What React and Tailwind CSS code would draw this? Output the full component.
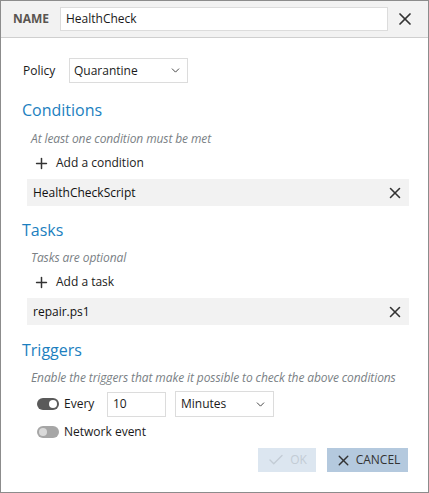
import { X, Plus, Check, ChevronDown } from "lucide-react";

function Toggle({ on }) {
    return (
        <span
            className={`relative inline-block h-[12px] w-[22px] rounded-full ${on ? "bg-[#5a5a5a]" : "bg-[#a6a6a6]"}`}
        >
            <span
                className={`absolute top-[2px] h-[8px] w-[8px] rounded-full ${on ? "right-[2px] bg-white" : "left-[2px] bg-[#d9d9d9]"}`}
            ></span>
        </span>
    );
}

function Item({ label }) {
    return (
        <div className="mt-[4px] ml-[5px] flex h-[27px] w-[382px] items-center justify-between bg-[#f2f2f2] pl-[6px] pr-[5px]">
            <span className="text-[#111]">{label}</span>
            <X size={18} strokeWidth={2.1} className="text-[#333]" />
        </div>
    );
}

function AddLink({ label }) {
    return (
        <div className="mt-[2px] ml-[11px] flex h-[24px] items-center gap-[6px] text-[#222]">
            <Plus size={17} strokeWidth={2.1} className="text-[#333]" />
            <span>{label}</span>
        </div>
    );
}

function Heading({ children, className }) {
    return <div className={`flex h-[24px] items-center text-[16px] text-[#1c7fc0] ${className}`}>{children}</div>;
}

function Hint({ children, className }) {
    return (
        <div className={`flex h-[20px] items-center pl-[9px] italic tracking-[-0.1px] text-[#7a7f85] ${className}`}>
            {children}
        </div>
    );
}

export default function App() {
    return (
        <div
            className="flex h-[493px] w-[429px] flex-col border border-[#8c8c8c] bg-white text-[12px] text-[#1a1a1a]"
            style={{ fontFamily: '"Open Sans", "Noto Sans", sans-serif' }}
        >
            {/* Header */}
            <div className="flex h-[37px] shrink-0 items-center border-b border-[#cfcfcf] bg-[#f2f2f2] pl-[12px] pr-[6px]">
                <span className="w-[47px] font-bold text-[#5a5550]">NAME</span>
                <div className="flex h-[24px] w-[328px] items-center border border-[#dcdcdc] bg-white px-[5px]">
                    HealthCheck
                </div>
                <div className="flex flex-1 justify-center">
                    <X size={20} strokeWidth={2.1} className="text-[#333]" />
                </div>
            </div>

            {/* Body */}
            <div className="flex flex-col pl-[21px]">
                <div className="mt-[20px] flex h-[25px] items-center">
                    <span className="w-[47px] pl-[1px]">Policy</span>
                    <div className="flex h-[25px] w-[119px] items-center justify-between border border-[#dcdcdc] bg-white pl-[4px] pr-[5px]">
                        <span>Quarantine</span>
                        <ChevronDown size={13} strokeWidth={1.8} className="text-[#444]" />
                    </div>
                </div>

                <Heading className="mt-[15px]">Conditions</Heading>
                <Hint className="mt-[7px]">At least one condition must be met</Hint>
                <AddLink label="Add a condition" />
                <Item label="HealthCheckScript" />

                <Heading className="mt-[12px]">Tasks</Heading>
                <Hint className="mt-[6px]">Tasks are optional</Hint>
                <AddLink label="Add a task" />
                <Item label="repair.ps1" />

                <Heading className="mt-[13px]">Triggers</Heading>
                <Hint className="mt-[6px]">Enable the triggers that make it possible to check the above conditions</Hint>

                <div className="mt-[3px] flex h-[26px] items-center pl-[15px]">
                    <Toggle on />
                    <span className="ml-[5px] w-[43px]">Every</span>
                    <div className="flex h-[25px] w-[59px] items-center border border-[#dcdcdc] bg-white pl-[5px]">10</div>
                    <div className="ml-[9px] flex h-[26px] w-[99px] items-center justify-between border border-[#dcdcdc] bg-white pl-[5px] pr-[6px]">
                        <span>Minutes</span>
                        <ChevronDown size={13} strokeWidth={1.8} className="text-[#444]" />
                    </div>
                </div>
                <div className="mt-[5px] flex h-[20px] items-center pl-[15px]">
                    <Toggle />
                    <span className="ml-[5px]">Network event</span>
                </div>

                <div className="mt-[6px] flex justify-end gap-[11px] pr-[20px]">
                    <button className="flex h-[24px] w-[58px] items-center justify-center gap-[5px] bg-[#dce6f0] text-[#c3ccd5]">
                        <Check size={18} strokeWidth={1.8} />
                        <span>OK</span>
                    </button>
                    <button className="flex h-[24px] w-[81px] items-center justify-center gap-[4px] bg-[#b4c9de] text-[#333]">
                        <X size={17} strokeWidth={2} />
                        <span>CANCEL</span>
                    </button>
                </div>
            </div>
        </div>
    );
}
